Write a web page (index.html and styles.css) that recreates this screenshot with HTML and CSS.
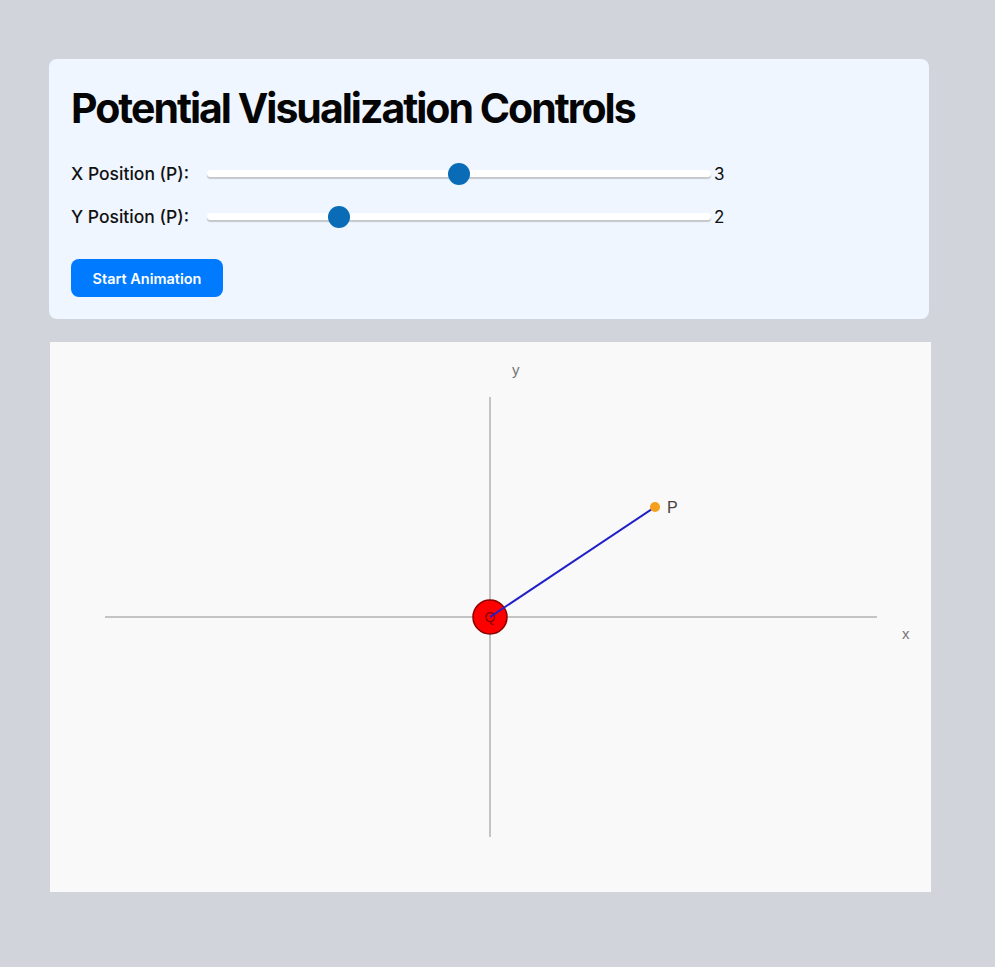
FILE: index.html
```html
<!DOCTYPE html>
<html lang="en">
<head>
  <meta charset="UTF-8" />
  <meta name="viewport" content="width=device-width, initial-scale=1.0" />
  <title>Potential Visualization</title>
  <link rel="stylesheet" href="styles.css">
</head>
<body>
  <div class="page">
    <div class="controls">
      <h1>Potential Visualization Controls</h1>
      <div class="row">
        <label for="px">X Position (P):</label>
        <input type="range" id="px" min="1" max="5" step="1" value="3">
        <span class="value" id="pxValue">3</span>
      </div>
      <div class="row">
        <label for="py">Y Position (P):</label>
        <input type="range" id="py" min="1" max="5" step="1" value="2">
        <span class="value" id="pyValue">2</span>
      </div>
      <button class="btn" id="startBtn">Start Animation</button>
    </div>

    <!-- Plot area: origin at (440, 275), 55px per unit -->
    <svg class="plot" width="881" height="550" viewBox="0 0 881 550">
      <line class="axis" x1="55" y1="275" x2="827" y2="275" />
      <line class="axis" x1="440" y1="55" x2="440" y2="495" />
      <text class="axis-label" x="852" y="297">x</text>
      <text class="axis-label" x="462" y="33">y</text>
      <circle class="charge" cx="440" cy="275" r="17" />
      <text class="charge-label" x="440" y="280">Q</text>
      <line class="vector" id="vec" x1="440" y1="275" x2="605" y2="165" />
      <circle class="point" id="pt" cx="605" cy="165" r="5" />
      <text class="point-label" id="ptLabel" x="617" y="171">P</text>
    </svg>
  </div>

  <script>
    const px = document.getElementById('px');
    const py = document.getElementById('py');
    const vec = document.getElementById('vec');
    const pt = document.getElementById('pt');
    const ptLabel = document.getElementById('ptLabel');
    const scale = 55;

    // Move P to the slider values
    function update() {
      const x = 440 + px.value * scale;
      const y = 275 - py.value * scale;
      document.getElementById('pxValue').textContent = px.value;
      document.getElementById('pyValue').textContent = py.value;
      vec.setAttribute('x2', x);
      vec.setAttribute('y2', y);
      pt.setAttribute('cx', x);
      pt.setAttribute('cy', y);
      ptLabel.setAttribute('x', x + 12);
      ptLabel.setAttribute('y', y + 6);
    }

    px.addEventListener('input', update);
    py.addEventListener('input', update);
  </script>
</body>
</html>
```

FILE: styles.css
```css
/* Basic page styling */
body {
  margin: 0;
  padding: 0;
  background: #d1d5db;
  font-family: Inter, "Noto Sans", sans-serif;
  color: #111;
}
.page {
  padding: 59px 0 40px 49px;
}
.controls {
  width: 880px;
  box-sizing: border-box;
  background: #eff6ff;
  border-radius: 8px;
  padding: 25px 22px 22px 22px;
  margin-bottom: 23px;
}
h1 {
  margin: 0 0 20px 0;
  font-size: 41px;
  font-weight: 700;
  letter-spacing: -2px;
  line-height: 48px;
  color: #050505;
}
.row {
  display: flex;
  align-items: center;
  height: 43px;
}
.row label {
  font-size: 17.5px;
  font-weight: 500;
  width: 136px;
  color: #111;
}
.value {
  font-size: 17px;
  margin-left: 3px;
}

/* Range slider */
input[type="range"] {
  -webkit-appearance: none;
  appearance: none;
  width: 504px;
  height: 7px;
  margin: 0;
  background: #fff;
  border-radius: 4px;
  box-shadow: 0 2px 1px #c4c8cc;
  outline: none;
}
input[type="range"]::-webkit-slider-thumb {
  -webkit-appearance: none;
  width: 22px;
  height: 22px;
  border-radius: 50%;
  background: #0a6cb6;
  cursor: pointer;
}
input[type="range"]::-moz-range-thumb {
  width: 22px;
  height: 22px;
  border: none;
  border-radius: 50%;
  background: #0a6cb6;
}

.btn {
  margin-top: 21px;
  width: 152px;
  height: 38px;
  border: none;
  border-radius: 8px;
  background: #007bff;
  color: #fff;
  font-family: Inter, "Noto Sans", sans-serif;
  font-size: 14.5px;
  font-weight: 600;
  cursor: pointer;
}

/* Plot */
.plot {
  display: block;
  margin-left: 1px;
  background: #f9f9f9;
}
.axis {
  stroke: #c4c4c4;
  stroke-width: 2;
}
.axis-label {
  font-family: "Liberation Sans", Arial, sans-serif;
  font-size: 15px;
  fill: #777;
}
.vector {
  stroke: #2020c8;
  stroke-width: 2;
}
.charge {
  fill: #ff0000;
  stroke: #8b0000;
  stroke-width: 1.5;
}
.charge-label {
  font-family: "Liberation Sans", Arial, sans-serif;
  font-size: 14px;
  fill: #8b0000;
  text-anchor: middle;
}
.point {
  fill: #f5a01a;
}
.point-label {
  font-family: "Liberation Sans", Arial, sans-serif;
  font-size: 16px;
  fill: #444;
}
```
